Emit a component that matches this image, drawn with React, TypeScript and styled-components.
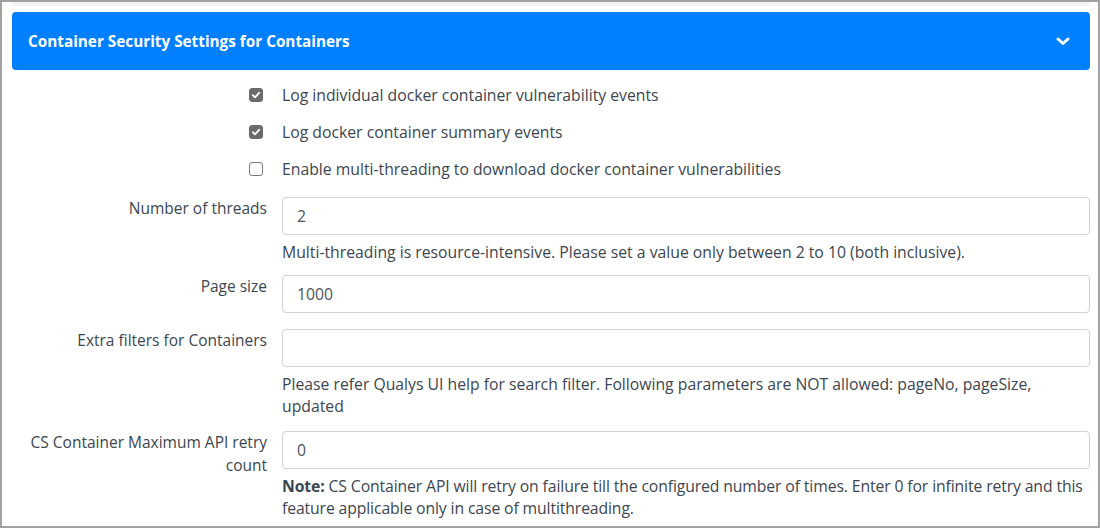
import React from "react";
import styled, { createGlobalStyle } from "styled-components";

const Global = createGlobalStyle`
  html, body { margin: 0; padding: 0; background: #fff; }
  body { font-family: "Open Sans", "Liberation Sans", sans-serif; color: #3c4650; }
  * { box-sizing: border-box; }
`;

const Frame = styled.div`
  width: 1100px;
  height: 528px;
  border: 2px solid #a2a2a2;
  padding: 0 8px 0 10px;
  overflow: hidden;
  background: #fff;
`;

const PrevCardEdge = styled.div`
  height: 4px;
  background: #f1f2f3;
  border-radius: 0 0 4px 4px;
`;

const Header = styled.div`
  margin-top: 6px;
  height: 58px;
  background: #0080ff;
  border-radius: 4px;
  display: flex;
  align-items: center;
  justify-content: space-between;
  padding: 0 20px 0 16px;
  color: #fff;
  font-size: 15.3px;
  font-weight: 700;
`;

const Body = styled.div`
  padding-top: 14px;
  display: flex;
  flex-direction: column;
`;

const Row = styled.div<{ $gap?: number }>`
  display: flex;
  margin-bottom: ${(p) => p.$gap ?? 16}px;
`;

const LabelCol = styled.div`
  flex: 0 0 270px;
  padding-right: 15px;
  padding-top: 0;
  text-align: right;
  font-size: 15.5px;
  line-height: 23px;
  display: flex;
  justify-content: flex-end;
  align-items: flex-start;
`;

const FieldCol = styled.div`
  flex: 1;
  min-width: 0;
  font-size: 15.75px;
  line-height: 22px;
`;

const Box = styled.span<{ $on?: boolean }>`
  width: 14px;
  height: 14px;
  margin-top: 4px;
  margin-right: 4px;
  border-radius: 3px;
  background: ${(p) => (p.$on ? "#6b6b6b" : "#fff")};
  border: 1px solid ${(p) => (p.$on ? "#6b6b6b" : "#7a7a7a")};
  display: flex;
  align-items: center;
  justify-content: center;
`;

const Input = styled.div`
  height: 38px;
  border: 1px solid #cfd3d7;
  border-radius: 4px;
  padding: 0 14px;
  display: flex;
  align-items: center;
  font-size: 15.75px;
  color: #4a535c;
`;

const Help = styled.div<{ $tight?: boolean }>`
  margin-top: 6px;
  font-size: 15.75px;
  line-height: 22px;
  color: #3c4650;
  letter-spacing: ${(p) => (p.$tight ? "-0.12px" : "0")};
  b { font-weight: 700; }
`;

const Check = ({ on }: { on?: boolean }) => (
  <Box $on={on}>
    {on && (
      <svg width="10" height="10" viewBox="0 0 10 10">
        <polyline points="1.8,5.2 4,7.4 8.3,2.6" fill="none" stroke="#fff" strokeWidth="1.8" strokeLinecap="round" strokeLinejoin="round" />
      </svg>
    )}
  </Box>
);

export default function App() {
  return (
    <>
      <Global />
      <Frame>
        <PrevCardEdge />
        <Header>
          <span>Container Security Settings for Containers</span>
          <svg width="14" height="9" viewBox="0 0 14 9">
            <polyline points="2,2 7,6.5 12,2" fill="none" stroke="#fff" strokeWidth="3" strokeLinecap="round" strokeLinejoin="round" />
          </svg>
        </Header>
        <Body>
          <Row $gap={15}>
            <LabelCol><Check on /></LabelCol>
            <FieldCol>Log individual docker container vulnerability events</FieldCol>
          </Row>
          <Row $gap={15}>
            <LabelCol><Check on /></LabelCol>
            <FieldCol>Log docker container summary events</FieldCol>
          </Row>
          <Row $gap={17}>
            <LabelCol><Check /></LabelCol>
            <FieldCol>Enable multi-threading to download docker container vulnerabilities</FieldCol>
          </Row>
          <Row $gap={12}>
            <LabelCol>Number of threads</LabelCol>
            <FieldCol>
              <Input>2</Input>
              <Help>Multi-threading is resource-intensive. Please set a value only between 2 to 10 (both inclusive).</Help>
            </FieldCol>
          </Row>
          <Row $gap={16}>
            <LabelCol>Page size</LabelCol>
            <FieldCol>
              <Input>1000</Input>
            </FieldCol>
          </Row>
          <Row $gap={14}>
            <LabelCol>Extra filters for Containers</LabelCol>
            <FieldCol>
              <Input />
              <Help>Please refer Qualys UI help for search filter. Following parameters are NOT allowed: pageNo, pageSize, updated</Help>
            </FieldCol>
          </Row>
          <Row $gap={0}>
            <LabelCol>CS Container Maximum API retry count</LabelCol>
            <FieldCol>
              <Input>0</Input>
              <Help $tight><b>Note:</b> CS Container API will retry on failure till the configured number of times. Enter 0 for infinite retry and this feature applicable only in case of multithreading.</Help>
            </FieldCol>
          </Row>
        </Body>
      </Frame>
    </>
  );
}
